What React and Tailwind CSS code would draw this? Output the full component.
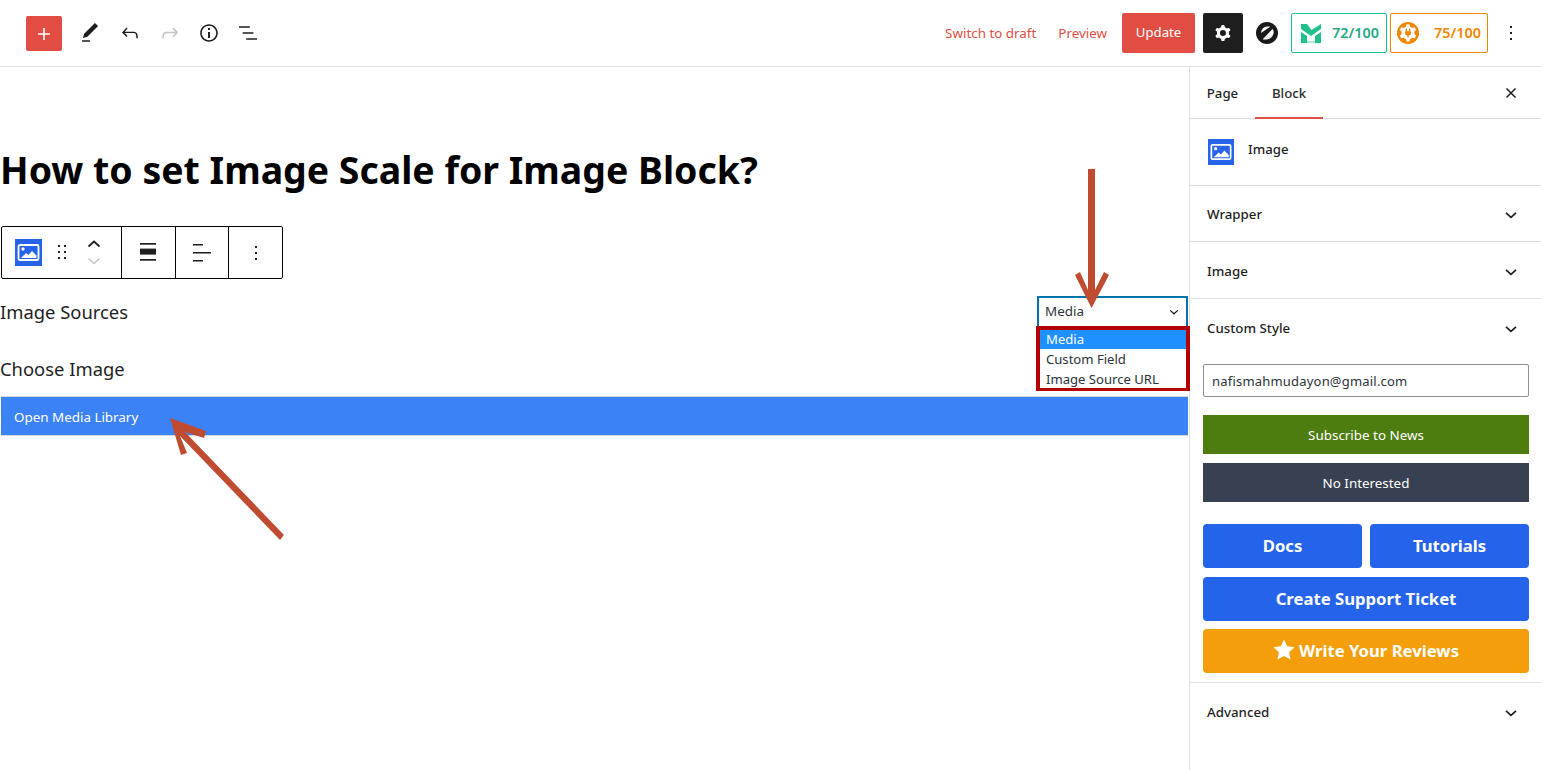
const F = { fontFamily: '"Noto Sans", sans-serif' };

const COG = "M10.289 4.836A1 1 0 0111.275 4h1.306a1 1 0 01.987.836l.244 1.466c.787.26 1.503.679 2.108 1.218l1.393-.522a1 1 0 011.216.437l.653 1.13a1 1 0 01-.23 1.273l-1.148.944a6.025 6.025 0 010 2.435l1.149.946a1 1 0 01.23 1.272l-.653 1.13a1 1 0 01-1.216.437l-1.394-.522c-.605.54-1.32.958-2.108 1.218l-.244 1.466a1 1 0 01-.987.836h-1.306a1 1 0 01-.986-.836l-.244-1.466a5.995 5.995 0 01-2.108-1.218l-1.394.522a1 1 0 01-1.217-.436l-.653-1.131a1 1 0 01.23-1.272l1.149-.946a6.026 6.026 0 010-2.435l-1.148-.944a1 1 0 01-.23-1.272l.653-1.131a1 1 0 011.217-.437l1.393.522a5.994 5.994 0 012.108-1.218l.244-1.466zM14.929 12a3 3 0 11-6 0 3 3 0 016 0z";

function Ic({ d, size = 24, vb = "0 0 24 24", className = "" }) {
  return (
    <svg width={size} height={size} viewBox={vb} fill="currentColor" className={className}>
      <path d={d} fillRule="evenodd" clipRule="evenodd" />
    </svg>
  );
}

function ImageIcon({ size = 27 }) {
  return (
    <svg width={size} height={size} viewBox="0 0 27 27" className="shrink-0">
      <rect width="27" height="27" fill="#2563eb" />
      <rect x="3.5" y="6" width="20" height="15" rx="1.5" fill="none" stroke="#fff" strokeWidth="1.8" />
      <circle cx="8" cy="10" r="1.7" fill="#fff" />
      <path d="M6 19 L11 14 L13.5 16 L17 12 L21.5 16.5 V19 Z" fill="#fff" />
    </svg>
  );
}

function Chevron({ className = "" }) {
  return (
    <svg width="14" height="14" viewBox="0 0 14 14" fill="none" stroke="#1e1e1e" strokeWidth="1.7" className={className}>
      <path d="M2 4.8 L7 9.4 L12 4.8" />
    </svg>
  );
}

function Panel({ title, className = "" }) {
  return (
    <div className={`flex items-center justify-between pl-[17px] pr-[23px] border-b border-[#e0e0e0] text-[13.3px] font-medium text-[#1e1e1e] ${className}`}>
      <span>{title}</span>
      <Chevron />
    </div>
  );
}

function Toolbar() {
  return (
    <div className="flex h-[53px] w-[282px] ml-px border border-black rounded-[2px] bg-white text-[#1e1e1e]">
      <div className="w-[120px] flex items-center border-r border-black pl-[13px]">
        <ImageIcon />
        <Ic className="ml-[8px] -mt-px" d="M8 7h2V5H8v2zm0 6h2v-2H8v2zm0 6h2v-2H8v2zm6-14v2h2V5h-2zm0 8h2v-2h-2v2zm0 6h2v-2h-2v2z" />
        <div className="ml-[13px] -mt-[2px] flex flex-col gap-[8px]">
          <svg width="14" height="10" viewBox="0 0 14 10" fill="none" stroke="#1e1e1e" strokeWidth="1.7"><path d="M1.5 7.5 L7 2.5 L12.5 7.5" /></svg>
          <svg width="14" height="8" viewBox="0 0 14 8" fill="none" stroke="#c4c4c4" strokeWidth="1.5"><path d="M1.5 1.5 L7 6.5 L12.5 1.5" /></svg>
        </div>
      </div>
      <div className="w-[54px] flex items-center justify-center border-r border-black pr-[2px]">
        <svg width="16" height="18" viewBox="0 0 16 18" fill="#1e1e1e" className="-mt-px">
          <rect y="0" width="16" height="1.7" />
          <rect y="5.6" width="16" height="6" />
          <rect y="16" width="16" height="1.7" />
        </svg>
      </div>
      <div className="w-[53px] flex items-center justify-center border-r border-black">
        <svg width="18" height="18" viewBox="0 0 18 18" fill="#1e1e1e">
          <rect x="0" y="0" width="10" height="1.5" />
          <rect x="0" y="8" width="18" height="1.5" />
          <rect x="0" y="16" width="10" height="1.5" />
        </svg>
      </div>
      <div className="flex-1 flex items-center justify-center">
        <Ic d="M13 19h-2v-2h2v2zm0-6h-2v-2h2v2zm0-6h-2V5h2v2z" />
      </div>
    </div>
  );
}

function SourceSelect() {
  return (
    <div className="relative w-[151px] mr-px h-[30px] border-2 border-[#0073aa] border-b-0 bg-white flex items-center justify-between pl-[6px] pr-[5px] text-[13.4px] text-[#2c3338]">
      <span className="-mt-[2px]">Media</span>
      <Chevron className="scale-75" />
      <div className="absolute left-[-3px] top-[28px] w-[154px] h-[65px] border-4 border-b-[3px] border-[#b30000] bg-white text-[13.1px] leading-[20px] z-10">
        <div className="bg-[#1e90ff] text-white pl-[6px] h-[19px] leading-[19px]">Media</div>
        <div className="pl-[6px]">Custom Field</div>
        <div className="pl-[6px]">Image Source URL</div>
      </div>
    </div>
  );
}

export default function App() {
  return (
    <div className="relative w-[1541px] h-[770px] overflow-hidden bg-white flex flex-col" style={F}>
      {/* top bar */}
      <header className="h-[67px] shrink-0 border-b border-[#e0e0e0] flex items-center pl-[26px] pr-[18px] text-[#1e1e1e]">
        <button className="mt-px w-[36px] h-[35px] rounded-[2px] bg-[#e14d43] text-white flex items-center justify-center">
          <Ic d="M18 11.2h-5.2V6h-1.6v5.2H6v1.6h5.2V18h1.6v-5.2H18z" />
        </button>
        <Ic className="ml-[16px]" d="M20.1 5.1L16.9 2 6.2 12.7l-1.3 4.4 4.5-1.3L20.1 5.1zM4 20.8h8v-1.5H4v1.5z" />
        <Ic className="ml-[16px]" d="M18.3 11.7c-.6-.6-1.4-.9-2.3-.9H6.7l2.9-3.3-1.1-1-4.5 5L8.5 16l1-1-2.7-3h9.2c.5 0 .9.2 1.3.5 1 1 1 3.4 1 4.5v.3h1.5v-.2c0-1.5 0-4.3-1.5-5.7z" />
        <Ic className="ml-[16px] text-[#c4c4c4]" d="M15.6 6.5l-1.1 1 2.9 3.3H8c-.9 0-1.7.3-2.3.9-1.4 1.5-1.4 4.2-1.4 5.6v.2h1.5v-.3c0-1.1 0-3.5 1-4.5.3-.3.7-.5 1.3-.5h9.2L14.5 15l1.1 1.1 4.6-4.6-4.6-5z" />
        <Ic className="ml-[15px]" d="M12 3.2c-4.8 0-8.8 3.9-8.8 8.8 0 4.8 3.9 8.8 8.8 8.8 4.8 0 8.8-3.9 8.8-8.8 0-4.8-4-8.8-8.8-8.8zm0 16c-4 0-7.2-3.3-7.2-7.2C4.8 8 8 4.8 12 4.8s7.2 3.3 7.2 7.2c0 4-3.2 7.2-7.2 7.2zM11 17h2v-6h-2v6zm0-8h2V7h-2v2z" />
        <Ic className="ml-[15px]" d="M13.8 5.2H3v1.5h10.8V5.2zm-3.6 12v1.5H21v-1.5H10.2zm7.2-6H6.6v1.5h10.8v-1.5z" />

        <div className="ml-auto flex items-center">
          <span className="text-[13.4px] text-[#e14d43] mr-[22px]">Switch to draft</span>
          <span className="text-[13.4px] text-[#e14d43] mr-[15px]">Preview</span>
          <button className="w-[73px] h-[40px] rounded-[2px] bg-[#e14d43] text-white text-[13.2px] flex items-center justify-center">Update</button>
          <button className="ml-[8px] w-[40px] h-[40px] rounded-[2px] bg-[#1e1e1e] text-white flex items-center justify-center">
            <Ic d={COG} />
          </button>
          <svg width="22" height="22" viewBox="0 0 22 22" className="ml-[13px]">
            <circle cx="11" cy="11" r="11" fill="#1a1a1a" />
            <path d="M5 11 Q5.5 5 11 4.5 H14.5 Z" fill="#fff" />
            <path d="M16.5 7 Q18 8.5 17.5 11.5 Q16.5 16.5 11 17.5 H6.5 Z" fill="#fff" />
          </svg>
          <div className="ml-[13px] w-[96px] h-[40px] rounded-[2px] border border-[#1fbf8f] flex items-center pl-[9px] text-[14.4px] font-semibold text-[#1fa97f]">
            <svg width="20" height="19" viewBox="0 0 20 19" fill="#21c08f" className="shrink-0">
              <path d="M0 0 H6 L10.5 6 L20 0 V5 L10 12 L0 5 Z" />
              <path d="M0 8 L6 12 V19 H0 Z" />
              <path d="M14 12 L20 8 V19 H14 Z" />
              <path d="M6 17 H14 V19 H6 Z" fill="#a5e8d2" />
            </svg>
            <span className="ml-[11px]">72/100</span>
          </div>
          <div className="ml-[3px] w-[98px] h-[40px] rounded-[2px] border border-[#f28500] flex items-center pl-[6px] text-[14.4px] font-semibold text-[#f28500]">
            <svg width="22" height="22" viewBox="0 0 22 22" className="shrink-0 -mt-px">
              <circle cx="11" cy="11" r="11" fill="#f28500" />
              <g transform="translate(-1.9 -2.1) scale(1.08)">
                <path d={COG} fill="#fff" />
                <circle cx="11.93" cy="12" r="3.4" fill="#fff" />
              </g>
              <path d="M9.3 6.8 v2.6 M12.7 6.8 v2.6" stroke="#f28500" strokeWidth="1.3" />
              <path d="M8 9.2 h6 v1.2 a3 3 0 0 1-6 0z M10.3 13 h1.4 v2.6 h-1.4z" fill="#f28500" />
            </svg>
            <span className="ml-[15px]">75/100</span>
          </div>
          <Ic className="ml-[11px]" d="M13 19h-2v-2h2v2zm0-6h-2v-2h2v2zm0-6h-2V5h2v2z" />
        </div>
      </header>

      <div className="flex-1 flex min-h-0">
        {/* editor */}
        <main className="w-[1189px] shrink-0 flex flex-col text-black">
          <h1 className="mt-[76px] h-[54px] text-[37.45px] leading-[54px] font-bold whitespace-nowrap">How to set Image Scale for Image Block?</h1>
          <div className="mt-[29px]"><Toolbar /></div>
          <div className="mt-[17px] flex items-start justify-between h-[30px]">
            <span className="text-[18.4px] leading-[32px] text-[#1e1e1e]">Image Sources</span>
            <SourceSelect />
          </div>
          <div className="mt-[27px] h-[30px] text-[18.4px] leading-[32px] text-[#1e1e1e]">Choose Image</div>
          <div className="mt-[13px] mx-px h-[40px] pt-[3px] bg-[#3b82f6] border-y border-[#d5d5d5] text-white text-[13.4px] flex items-center pl-[13px]">Open Media Library</div>
        </main>

        {/* sidebar */}
        <aside className="flex-1 border-l border-[#e0e0e0] flex flex-col min-w-0">
          <div className="h-[52px] shrink-0 border-b border-[#e0e0e0] flex items-stretch text-[13.2px] font-medium text-[#1e1e1e]">
            <div className="w-[65px] flex items-center justify-center pt-[3px]">Page</div>
            <div className="w-[68px] flex items-center justify-center pt-[3px] border-b-2 border-[#e14d43] -mb-px text-[#2c2c2c]">Block</div>
            <div className="ml-auto mr-[23px] flex items-center">
              <svg width="14" height="14" viewBox="0 0 14 14" fill="none" stroke="#1e1e1e" strokeWidth="1.5"><path d="M2.5 2.5 L11.5 11.5 M11.5 2.5 L2.5 11.5" /></svg>
            </div>
          </div>
          <div className="h-[67px] shrink-0 border-b border-[#e0e0e0] flex items-start pl-[18px] pt-[20px]">
            <ImageIcon size={26} />
            <span className="ml-[14px] text-[13.2px] font-medium text-[#1e1e1e] leading-[20px]">Image</span>
          </div>
          <Panel title="Wrapper" className="h-[56px] shrink-0 pt-[2px]" />
          <Panel title="Image" className="h-[57px] shrink-0 pt-[3px]" />
          <div className="shrink-0 border-b border-[#e0e0e0] pb-[9px]">
            <div className="h-[57px] flex items-center justify-between pl-[17px] pr-[23px] pt-[2px] text-[13.3px] font-medium text-[#1e1e1e]">
              <span>Custom Style</span>
              <Chevron />
            </div>
            <div className="pl-[13px] pr-[12px] flex flex-col">
              <div className="mt-[8px] h-[33px] border border-[#8c8f94] rounded-[2px] pt-[2px] text-[13px] text-[#2c3338] flex items-center pl-[8px] tracking-[0.2px]">nafismahmudayon@gmail.com</div>
              <div className="mt-[18px] h-[39px] pt-px bg-[#4d7c0f] text-white text-[13.4px] flex items-center justify-center">Subscribe to News</div>
              <div className="mt-[9px] h-[39px] pt-px bg-[#374151] text-white text-[13.4px] flex items-center justify-center">No Interested</div>
              <div className="mt-[22px] grid grid-cols-2 gap-[8px]">
                <div className="h-[44px] rounded-[4px] bg-[#2563eb] text-white text-[16.7px] font-bold flex items-center justify-center">Docs</div>
                <div className="h-[44px] rounded-[4px] bg-[#2563eb] text-white text-[16.7px] font-bold flex items-center justify-center">Tutorials</div>
              </div>
              <div className="mt-[9px] h-[44px] rounded-[4px] bg-[#2563eb] text-white text-[16.7px] font-bold flex items-center justify-center">Create Support Ticket</div>
              <div className="mt-[8px] h-[44px] rounded-[4px] bg-[#f59e0b] text-white text-[16.7px] font-bold flex items-center justify-center">
                <svg width="22" height="21" viewBox="0 0 24 23" fill="#fff" className="mr-[4px] -mt-[4px]"><path d="M12 0.5 L15.5 8 L23.5 9 L17.6 14.5 L19.2 22.5 L12 18.5 L4.8 22.5 L6.4 14.5 L0.5 9 L8.5 8 Z" /></svg>
                Write Your Reviews
              </div>
            </div>
          </div>
          <div className="h-[59px] shrink-0 flex items-center justify-between pl-[17px] pr-[23px] text-[13.3px] font-medium text-[#1e1e1e]">
            <span>Advanced</span>
            <Chevron />
          </div>
        </aside>
      </div>

      {/* annotation arrows */}
      <svg width="1541" height="770" className="absolute inset-0 pointer-events-none z-20" fill="#bf4b30">
        <polygon points="1088,169 1095,169 1095,290 1104,272 1109,275 1091.5,308 1075,275 1080,272 1088,290" />
        <polygon points="170,418 206,431 204,438 185,432 284,535 280,540 180,436 187,453 181,455" />
      </svg>
    </div>
  );
}
